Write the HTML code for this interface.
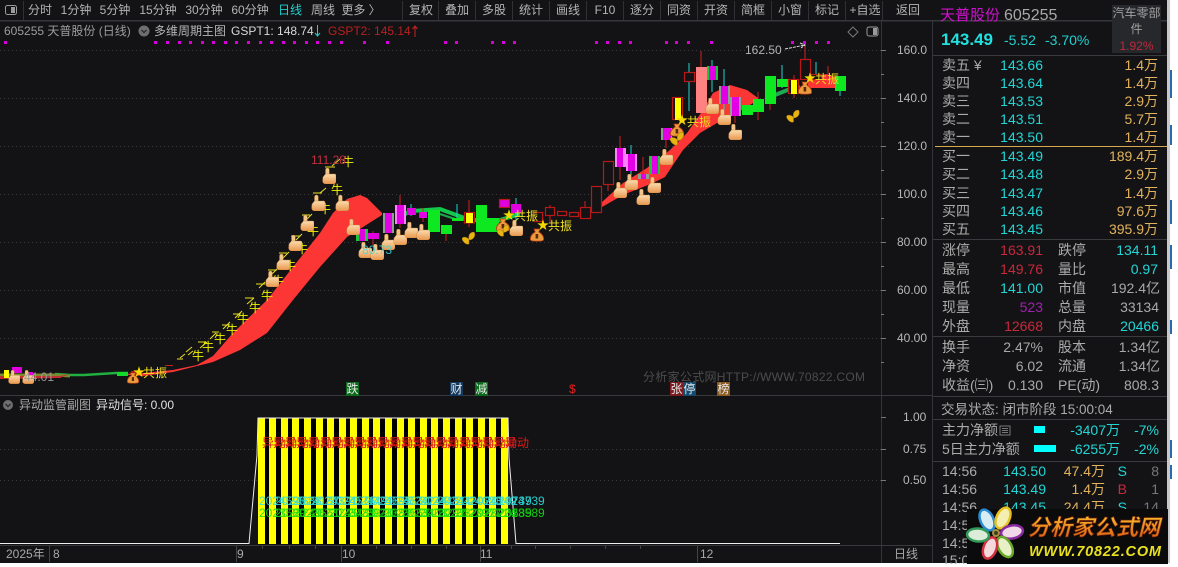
<!DOCTYPE html>
<html><head><meta charset="utf-8"><style>
html,body{margin:0;padding:0;background:#fff;width:1178px;height:567px;overflow:hidden}
svg{display:block}
text{font-family:"Liberation Sans","Noto Sans CJK SC",sans-serif;white-space:pre}
.t{font-size:12px;fill:#b4b4b4;text-anchor:middle}
.a{font-size:12px;fill:#b8b8b8}
.l{font-size:14px;fill:#ababab}
.p{font-size:14px;fill:#22d6d6;text-anchor:end}
.v{font-size:14px;fill:#e2b25c;text-anchor:end}
.g{font-size:14px;fill:#a8a8a8;text-anchor:end}
.r{font-size:14px;fill:#c8283c;text-anchor:end}
.n{font-size:12px;fill:#f0f000}
.z{font-size:12px;fill:#f0e020}
.sg{stroke:#3a3a3a;stroke-width:1;stroke-dasharray:1 3}
.w{stroke:#d02020;stroke-width:1}
.c{stroke:#22d0d0;stroke-width:1}
.h{fill:#131315;stroke:#b81818;stroke-width:1.2}
</style></head><body>
<svg width="1178" height="567" viewBox="0 0 1178 567" xmlns="http://www.w3.org/2000/svg">
<defs>
<linearGradient id="hg" x1="0" y1="0" x2="0" y2="1"><stop offset="0" stop-color="#fbdcae"/><stop offset="1" stop-color="#e9974e"/></linearGradient>
<linearGradient id="lg" x1="0" y1="0" x2="0" y2="1"><stop offset="0" stop-color="#f8c030"/><stop offset="1" stop-color="#d85a10"/></linearGradient>
<symbol id="hd" viewBox="0 0 14 16"><rect x="3.500" y="0" width="3.800" height="9" rx="1.800" fill="#f2c58a" stroke="#b9772f" stroke-width=".4"/><path d="M1 9 L3.500 6 H13 Q14 6 14 8 V13 Q14 16 11 16 H4 Q1 16 .6 13Z" fill="url(#hg)" stroke="#c58038" stroke-width=".4"/></symbol>
<symbol id="bg" viewBox="0 0 14 14"><path d="M4 1 L10 1 L8.800 4 C12.500 6 14 9 13.500 12 C13 13.600 1 13.600 .5 12 C0 9 1.500 6 5.200 4Z" fill="#ec9a3e" stroke="#b23a10" stroke-width=".8"/><rect x="5.600" y="6" width="2.600" height="4.500" fill="#5a2a10"/></symbol>
<symbol id="bf" viewBox="0 0 14 13"><path d="M7 7 C6 2 9 0 12 0 C14 3 12 8 7 8Z M7 7 C3 4 0 5 0 7 C1 10 4 13 7 12Z" fill="#e8b412" stroke="#a87808" stroke-width=".5"/></symbol>
</defs>
<rect width="1178" height="567" fill="#fff"/>
<rect width="1167" height="563" fill="#131315"/>
<rect x="1167" y="0" width="3" height="563" fill="#c8c8c8"/>
<g fill="#2a6ab0"><rect x="1170" y="70" width="2" height="28"/><rect x="1170" y="125" width="2" height="20"/><rect x="1170" y="200" width="2" height="24"/><rect x="1170" y="245" width="2" height="24"/><rect x="1170" y="320" width="2" height="14"/><rect x="1170" y="440" width="2" height="18"/><rect x="1170" y="465" width="2" height="14"/></g>

<!-- toolbar -->
<rect x="0" y="20" width="1167" height="1.500" fill="#36373a"/>
<rect x="5.500" y="5.500" width="11" height="9" rx="2" fill="none" stroke="#9a9a9a"/><rect x="11" y="7" width="4" height="6" fill="#9a9a9a"/>
<g stroke="#303134"><path d="M23.500 1V20M402.500 1V20M438.500 1V20M475.500 1V20M512.500 1V20M549.500 1V20M586.500 1V20M623.500 1V20M660.500 1V20M697.500 1V20M734.500 1V20M771.500 1V20M808.500 1V20M845.500 1V20M882.500 1V20"/></g>
<g>
<text class="t" x="40" y="14">分时</text><text class="t" x="76" y="14">1分钟</text><text class="t" x="115" y="14">5分钟</text><text class="t" x="158" y="14">15分钟</text><text class="t" x="204" y="14">30分钟</text><text class="t" x="250" y="14">60分钟</text><text class="t" x="290" y="14" style="fill:#20d0d0">日线</text><text class="t" x="323" y="14">周线</text><text class="t" x="361" y="14">更多 〉</text>
<text class="t" x="421" y="14">复权</text><text class="t" x="457" y="14">叠加</text><text class="t" x="494" y="14">多股</text><text class="t" x="531" y="14">统计</text><text class="t" x="568" y="14">画线</text><text class="t" x="605" y="14">F10</text><text class="t" x="642" y="14">逐分</text><text class="t" x="679" y="14">同资</text><text class="t" x="716" y="14">开资</text><text class="t" x="753" y="14">简框</text><text class="t" x="790" y="14">小窗</text><text class="t" x="827" y="14">标记</text><text class="t" x="865" y="14">+自选</text><text class="t" x="908" y="14">返回</text>
</g>

<!-- header line -->
<text x="4" y="35" font-size="12" fill="#9c9c9c">605255 天普股份 (日线)</text>
<circle cx="144" cy="31" r="5.500" fill="#6e6e6e"/><path d="M141.500 30l2.500 2.500 2.500-2.500" fill="none" stroke="#222" stroke-width="1.200"/>
<text x="154" y="35" font-size="12" fill="#b4b4b4">多维周期主图</text>
<text x="231" y="35" font-size="12" fill="#d8d8d8">GSPT1: 148.74</text>
<path d="M317.500 25V36M315 33l2.500 3 2.500-3" fill="none" stroke="#22d0d0"/>
<text x="328" y="35" font-size="12" fill="#b82020">GSPT2: 145.14</text>
<path d="M415 26V37M412.500 29l2.500-3 2.500 3" fill="none" stroke="#d02020"/>
<path d="M853 27l5 5-5 5-5-5z" fill="none" stroke="#777"/>
<rect x="867" y="27" width="11" height="9" rx="2" fill="none" stroke="#999"/><rect x="873" y="28" width="4" height="7" fill="#999"/>

<!-- magenta dots -->
<g fill="#d800d8">
<rect x="4" y="41" width="3" height="3"/><rect x="154" y="41" width="3" height="3"/><rect x="166" y="41" width="3" height="3"/><rect x="178" y="41" width="3" height="3"/><rect x="189" y="41" width="3" height="3"/><rect x="201" y="41" width="3" height="3"/><rect x="212" y="41" width="3" height="3"/><rect x="224" y="41" width="3" height="3"/><rect x="235" y="41" width="3" height="3"/><rect x="247" y="41" width="3" height="3"/><rect x="259" y="41" width="3" height="3"/><rect x="270" y="41" width="3" height="3"/><rect x="282" y="41" width="3" height="3"/><rect x="293" y="41" width="3" height="3"/><rect x="305" y="41" width="3" height="3"/><rect x="316" y="41" width="3" height="3"/><rect x="328" y="41" width="3" height="3"/><rect x="340" y="41" width="3" height="3"/><rect x="363" y="41" width="3" height="3"/><rect x="386" y="41" width="3" height="3"/><rect x="444" y="41" width="3" height="3"/><rect x="455" y="41" width="3" height="3"/><rect x="491" y="41" width="3" height="3"/><rect x="502" y="41" width="3" height="3"/><rect x="513" y="41" width="3" height="3"/><rect x="595" y="41" width="3" height="3"/><rect x="606" y="41" width="3" height="3"/><rect x="618" y="41" width="3" height="3"/><rect x="629" y="41" width="3" height="3"/><rect x="665" y="41" width="3" height="3"/><rect x="675" y="41" width="3" height="3"/><rect x="687" y="41" width="3" height="3"/><rect x="710" y="41" width="3" height="3"/><rect x="791" y="41" width="3" height="3"/><rect x="803" y="41" width="3" height="3"/><rect x="815" y="41" width="3" height="3"/><rect x="827" y="41" width="3" height="3"/>
</g>

<!-- grid -->
<path d="M0 50.500H881M0 98.500H881M0 146.500H881M0 194.500H881M0 242.500H881M0 290.500H881M0 338.500H881M0 480.500H881M0 449.500H881" class="sg" fill="none"/>

<!-- axes -->
<path d="M881.500 21V563M932.500 21V563" stroke="#34353a"/>
<path d="M0 395.500H932M0 545.500H932" stroke="#38393c"/>
<path d="M881 50.500h5M881 98.500h5M881 146.500h5M881 194.500h5M881 242.500h5M881 290.500h5M881 338.500h5M881 74.500h3M881 122.500h3M881 170.500h3M881 218.500h3M881 266.500h3M881 314.500h3M881 362.500h3M881 417.500h5M881 449.500h5M881 480.500h5" stroke="#777"/>
<g><text class="a" x="897" y="54">160.0</text><text class="a" x="897" y="102">140.0</text><text class="a" x="897" y="150">120.0</text><text class="a" x="897" y="198">100.0</text><text class="a" x="897" y="246">80.00</text><text class="a" x="897" y="294">60.00</text><text class="a" x="897" y="342">40.00</text><text class="a" x="903" y="421">1.00</text><text class="a" x="903" y="453">0.75</text><text class="a" x="903" y="484">0.50</text></g>

<!-- green thin ribbons -->
<path d="M55 374L70 375L84 375L116 373L128 373" fill="none" stroke="#1fb040" stroke-width="2.500"/>
<path d="M0 375L55 375L70 376" fill="none" stroke="#7a8a30" stroke-width="3"/>
<path d="M400 216L412 211L440 209L470 220L500 220L520 214" fill="none" stroke="#12c84a" stroke-width="4"/>
<path d="M440 214L458 220L475 220" fill="none" stroke="#1ea84a" stroke-width="2"/>
<path d="M775 95L790 89L800 87" fill="none" stroke="#1eaa50" stroke-width="4"/>

<!-- red ribbons -->
<path d="M120 374L143 373L173 370L197 365L213 356L233 333L267 300L293 267L320 233L333 213L347 199L360 195L367 198L382 213L382 215L363 227L347 237L320 267L293 300L267 333L240 350L213 362L197 366L173 372L143 376Z" fill="#fc3535"/>
<path d="M0 376L60 376L70 374L60 378L0 379Z" fill="#c03030"/>
<path d="M598 205L602 202L623 183L647 168L670 150L687 133L703 110L713 93L730 85L747 90L758 98L758 100L737 113L717 123L700 133L683 150L665 177L653 183L623 195L602 207Z" fill="#fc3535"/>
<path d="M808 79L826 74L840 78L840 88L808 88Z" fill="#fc3535"/>

<!-- candles left -->
<g>
<rect x="4" y="370" width="5" height="8" fill="#ffff00"/><rect x="12" y="367" width="10" height="6" fill="#e000e0"/><rect x="25" y="372" width="8" height="5" fill="#e000e0"/>
<rect x="117" y="372" width="11" height="4" fill="#14d82a"/><rect x="131" y="371" width="9" height="4" fill="#a81818"/>
<rect x="165" y="365" width="8" height="1" fill="#c02020"/>
<rect x="356" y="229" width="12" height="12" fill="#18c838"/><rect x="359" y="229" width="6" height="12" fill="#e000e0"/>
<path d="M373 231V245" class="w"/><rect x="368" y="233" width="11" height="6" fill="#e000e0"/>
<rect x="383" y="213" width="11" height="20" fill="#8aa090"/><rect x="385" y="213" width="7" height="20" fill="#e400e4"/>
<path d="M400 195V228" class="w"/><rect x="395" y="205" width="11" height="19" fill="#ff80ff"/><rect x="397" y="205" width="7" height="19" fill="#e400e4"/>
<path d="M411 204V216" class="c"/><rect x="407" y="208" width="9" height="7" fill="#e400e4"/>
<path d="M423 208V222" class="w"/><rect x="419" y="212" width="8" height="6" fill="#e400e4"/>
<rect x="428" y="210" width="12" height="22" fill="#0ee820"/>
<path d="M446 225V241" class="w"/><rect x="441" y="225" width="11" height="9" fill="#0ee820"/>
<path d="M457 204V221" class="c"/><rect x="452" y="218" width="11" height="3" fill="#0ee820"/>
<path d="M469 200V227" class="w"/><rect x="464.500" y="212.500" width="10" height="10.500" class="h"/><rect x="466" y="213" width="7" height="10" fill="#ffff00"/>
<rect x="476" y="205" width="11" height="27" fill="#0ee820"/><rect x="487" y="218" width="12" height="14" fill="#0ee820"/>
<rect x="499.500" y="199.500" width="10" height="8" class="h" style="fill:#e000e0"/>
<path d="M516 198V225" class="c"/><rect x="511" y="204" width="10" height="9" fill="#e000e0"/>
<rect x="533.500" y="212.500" width="9" height="9" class="h"/>
<path d="M550 205V222" class="w"/><rect x="545.500" y="207.500" width="9" height="8" class="h"/>
<rect x="557.500" y="211.500" width="9" height="4" class="h"/>
<rect x="569.500" y="212.500" width="9" height="4" class="h"/>
<path d="M585 201V207" class="w"/><rect x="580.500" y="207.500" width="10" height="11" class="h"/>
<rect x="591.500" y="186.500" width="10" height="26" class="h"/>
</g>
<!-- candles right -->
<g>
<path d="M608 185V191" class="w"/><rect x="603.500" y="161.500" width="10" height="23" class="h"/>
<path d="M620 136V180" class="w"/><rect x="615" y="148" width="11" height="19" fill="#ff80ff"/><rect x="617" y="148" width="6" height="19" fill="#e400e4"/>
<path d="M631 145V175" class="c"/><rect x="626" y="154" width="11" height="17" fill="#ff80ff"/><rect x="628" y="154" width="7" height="17" fill="#e400e4"/>
<path d="M643 157V175" class="w"/><rect x="638" y="174" width="11" height="5" fill="#8aa090"/><rect x="641" y="174" width="5" height="5" fill="#e400e4"/>
<rect x="649" y="156" width="11" height="18" fill="#18c838"/><rect x="652" y="156" width="6" height="18" fill="#e400e4"/>
<path d="M666 140V148" class="w"/><rect x="661" y="128" width="11" height="12" fill="#8aa090"/><rect x="663" y="128" width="8" height="12" fill="#e400e4"/>
<rect x="672.500" y="97.500" width="10" height="22" class="h"/><rect x="675" y="98" width="6" height="22" fill="#ffff00"/>
<path d="M689 63V111" class="c"/><rect x="684.500" y="72.500" width="10" height="9" class="h"/>
<path d="M701 51V67" class="w"/><rect x="696" y="67" width="11" height="46" fill="#ff8282"/>
<path d="M712 60V92" class="c"/><rect x="707" y="66" width="11" height="14" fill="#18c838"/><rect x="709" y="66" width="7" height="14" fill="#e400e4"/>
<path d="M724 69V110" class="c"/><rect x="719" y="86" width="11" height="18" fill="#8aa090"/><rect x="721" y="86" width="7" height="18" fill="#e400e4"/>
<path d="M735 116V123" class="w"/><rect x="730" y="97" width="11" height="19" fill="#8aa090"/><rect x="732" y="97" width="7" height="19" fill="#e400e4"/>
<rect x="742" y="105" width="11" height="10" fill="#0ee820"/>
<path d="M758 92V120" class="w"/><rect x="753" y="99" width="11" height="13" fill="#0ee820"/>
<path d="M770 104V110" class="w"/><rect x="765" y="76" width="11" height="28" fill="#0ee820"/>
<path d="M782 65V88" class="c"/><rect x="777" y="79" width="11" height="8" fill="#0ee820"/>
<path d="M794 75V98" class="w"/><rect x="788.500" y="79.500" width="10" height="14" class="h"/><rect x="791" y="80" width="6" height="14" fill="#ffff00"/>
<path d="M805 45V59" class="w"/><rect x="800.500" y="59.500" width="10" height="20" class="h"/>
<path d="M816 62V76" class="c"/><rect x="811.500" y="74.500" width="10" height="5" class="h"/>
<path d="M828 66V78" class="w"/>
<path d="M840 88V96" class="c"/><rect x="835" y="76" width="11" height="15" fill="#0ee820"/>
</g>

<!-- 牛 with arrows -->
<g fill="none" stroke="#e8e020" stroke-width="1">
<path d="M177 359h6M180 358l5-4"/><path d="M186 352l6-5M188 355l5-4"/><path d="M198 342h8M200 348l7-6"/><path d="M210 339l6-6M212 332h7"/><path d="M222 325h7M223 329l7-7"/><path d="M233 314h7M235 318l7-7"/><path d="M245 298h9M247 304l7-6"/><path d="M256 284h9M259 288l6-6"/><path d="M268 270h9M272 274l6-6"/><path d="M279 253h8M283 258l6-6"/><path d="M291 236h9M296 240l6-6"/><path d="M302 215h8M306 220l6-6"/><path d="M313 193h9M320 193l6-5"/><path d="M325 167h10M332 166l8-7"/>
</g>
<g><text class="n" x="192" y="360">牛</text><text class="n" x="202" y="351">牛</text><text class="n" x="214" y="343">牛</text><text class="n" x="226" y="334">牛</text><text class="n" x="237" y="323">牛</text><text class="n" x="249" y="312">牛</text><text class="n" x="261" y="300">牛</text><text class="n" x="272" y="285">牛</text><text class="n" x="284" y="270">牛</text><text class="n" x="296" y="253">牛</text><text class="n" x="307" y="235">牛</text><text class="n" x="319" y="213">牛</text><text class="n" x="331" y="194">牛</text><text class="n" x="342" y="166">牛</text></g>

<!-- hands -->
<use href="#hd" x="322" y="168" width="14" height="16"/><use href="#hd" x="311" y="195" width="14" height="16"/><use href="#hd" x="335" y="195" width="14" height="16"/><use href="#hd" x="300" y="215" width="14" height="16"/><use href="#hd" x="288" y="235" width="14" height="16"/><use href="#hd" x="276" y="254" width="14" height="16"/><use href="#hd" x="265" y="271" width="14" height="16"/><use href="#hd" x="346" y="219" width="14" height="16"/><use href="#hd" x="358" y="242" width="14" height="16"/><use href="#hd" x="370" y="244" width="14" height="16"/><use href="#hd" x="381" y="234" width="14" height="16"/><use href="#hd" x="393" y="229" width="14" height="16"/><use href="#hd" x="404" y="222" width="14" height="16"/><use href="#hd" x="416" y="224" width="14" height="16"/><use href="#hd" x="509" y="220" width="14" height="16"/>
<use href="#hd" x="613" y="182" width="14" height="16"/><use href="#hd" x="624" y="174" width="14" height="16"/><use href="#hd" x="636" y="189" width="14" height="16"/><use href="#hd" x="647" y="177" width="14" height="16"/><use href="#hd" x="659" y="149" width="14" height="16"/><use href="#hd" x="705" y="98" width="14" height="16"/><use href="#hd" x="717" y="109" width="14" height="16"/><use href="#hd" x="728" y="124" width="14" height="16"/>
<use href="#hd" x="8" y="370" width="12" height="14"/><use href="#hd" x="22" y="370" width="12" height="14"/>

<!-- bags -->
<use href="#bg" x="670" y="123" width="14" height="14"/><use href="#bg" x="798" y="81" width="14" height="14"/><use href="#bg" x="496" y="218" width="14" height="14"/><use href="#bg" x="530" y="228" width="14" height="14"/><use href="#bg" x="126" y="372" width="14" height="12"/>

<!-- butterflies -->
<use href="#bf" x="670" y="132" width="15" height="14"/><use href="#bf" x="786" y="110" width="15" height="13"/><use href="#bf" x="462" y="232" width="14" height="13"/><use href="#bf" x="497" y="224" width="13" height="14"/>

<!-- 共振 -->
<g font-size="12" fill="#f0e020">
<text x="133" y="376" fill="#f5d800">★</text><text class="z" x="143" y="377">共振</text>
<text x="503" y="219" fill="#f5d800">★</text><text class="z" x="514" y="220">共振</text>
<text x="537" y="229" fill="#f5d800">★</text><text class="z" x="548" y="230">共振</text>
<text x="676" y="124" fill="#f5d800">★</text><text class="z" x="687" y="126">共振</text>
<text x="804" y="82" fill="#f5d800">★</text><text class="z" x="815" y="83">共振</text>
</g>

<!-- value labels -->
<text x="311" y="164" font-size="12" fill="#c03040">111.28</text>
<text x="362" y="254" font-size="12" fill="#40d8d8" opacity=".85">80.73</text>
<text x="24" y="381" font-size="12" fill="#999">44.01</text>
<text x="745" y="54" font-size="12" fill="#b4b4b4">162.50</text>
<path d="M785 49l20-4M800 43l5 2-4 3" fill="none" stroke="#ddd" stroke-dasharray="3 1"/>

<!-- watermark -->
<text x="643" y="381" font-size="12" fill="#4c4c4c" textLength="222">分析家公式网HTTP://WWW.70822.COM</text>

<!-- signals -->
<rect x="346" y="382" width="13" height="14" fill="#0c6a1c"/><text x="346.500" y="393" font-size="12" fill="#e8e8e8">跌</text>
<rect x="450" y="382" width="13" height="14" fill="#123a60"/><text x="450.500" y="393" font-size="12" fill="#e8e8e8">财</text>
<rect x="475" y="382" width="13" height="14" fill="#0c6a1c"/><text x="475.500" y="393" font-size="12" fill="#e8e8e8">减</text>
<text x="569" y="393" font-size="12" fill="#e02020">$</text>
<rect x="670" y="382" width="13" height="14" fill="#7a1c20"/><text x="670.500" y="393" font-size="12" fill="#e8e8e8">张</text>
<rect x="683" y="382" width="13" height="14" fill="#124a70"/><text x="683.500" y="393" font-size="12" fill="#e8e8e8">停</text>
<rect x="717" y="382" width="13" height="14" fill="#8a5a20"/><text x="717.500" y="393" font-size="12" fill="#e8e8e8">榜</text>

<!-- sub chart header -->
<circle cx="8" cy="405" r="5" fill="#6e6e6e"/><path d="M5.500 404l2.500 2.500 2.500-2.500" fill="none" stroke="#222" stroke-width="1.200"/>
<text x="19" y="409" font-size="12" fill="#a8a8a8">异动监管副图</text>
<text x="96" y="409" font-size="12" fill="#e0e0e0">异动信号: 0.00</text>

<!-- sub chart -->
<rect x="258" y="418" width="250" height="126" fill="#000"/>
<g fill="#ffff00"><rect x="258" y="418" width="7" height="126"/><rect x="269" y="418" width="7" height="126"/><rect x="281" y="418" width="7" height="126"/><rect x="292" y="418" width="7" height="126"/><rect x="304" y="418" width="7" height="126"/><rect x="316" y="418" width="7" height="126"/><rect x="327" y="418" width="7" height="126"/><rect x="339" y="418" width="7" height="126"/><rect x="350" y="418" width="7" height="126"/><rect x="362" y="418" width="7" height="126"/><rect x="373" y="418" width="7" height="126"/><rect x="385" y="418" width="7" height="126"/><rect x="397" y="418" width="7" height="126"/><rect x="408" y="418" width="7" height="126"/><rect x="420" y="418" width="7" height="126"/><rect x="431" y="418" width="7" height="126"/><rect x="443" y="418" width="7" height="126"/><rect x="455" y="418" width="7" height="126"/><rect x="466" y="418" width="7" height="126"/><rect x="478" y="418" width="7" height="126"/><rect x="489" y="418" width="7" height="126"/><rect x="501" y="418" width="7" height="126"/></g>
<path d="M0 543.500H249L257 455L258 418H508L509 458L516 543.500H840" fill="none" stroke="#eee" stroke-width="1"/>
<g font-size="12" fill="#e01818">
<text x="262" y="447">异动</text><text x="273" y="447">异动</text><text x="285" y="447">异动</text><text x="296" y="447">异动</text><text x="308" y="447">异动</text><text x="320" y="447">异动</text><text x="331" y="447">异动</text><text x="343" y="447">异动</text><text x="354" y="447">异动</text><text x="366" y="447">异动</text><text x="377" y="447">异动</text><text x="389" y="447">异动</text><text x="401" y="447">异动</text><text x="412" y="447">异动</text><text x="424" y="447">异动</text><text x="435" y="447">异动</text><text x="447" y="447">异动</text><text x="459" y="447">异动</text><text x="470" y="447">异动</text><text x="482" y="447">异动</text><text x="493" y="447">异动</text><text x="505" y="447">异动</text>
</g>
<g font-size="12" fill="#2ce0e0" opacity=".9">
<text x="259" y="505">2024595</text><text x="275" y="505">2024688</text><text x="293" y="505">2024187</text><text x="311" y="505">2024391</text><text x="329" y="505">2024576</text><text x="347" y="505">2024491</text><text x="365" y="505">2024695</text><text x="383" y="505">2024530</text><text x="401" y="505">2024244</text><text x="419" y="505">2024481</text><text x="437" y="505">2024420</text><text x="455" y="505">2024623</text><text x="470" y="505">2024349</text><text x="485" y="505">2024739</text><text x="498" y="505">2024739</text>
</g>
<g font-size="12" fill="#10e010" opacity=".9">
<text x="259" y="517">2023589</text><text x="275" y="517">2023249</text><text x="293" y="517">2023561</text><text x="311" y="517">2023245</text><text x="329" y="517">2023483</text><text x="347" y="517">2023920</text><text x="365" y="517">2023382</text><text x="383" y="517">2023653</text><text x="401" y="517">2023403</text><text x="419" y="517">2023292</text><text x="437" y="517">2023829</text><text x="455" y="517">2023977</text><text x="470" y="517">2023224</text><text x="485" y="517">2023589</text><text x="498" y="517">2023589</text>
</g>

<!-- x axis -->
<g font-size="12" fill="#a8a8a8"><text x="6" y="558">2025年</text><text x="53" y="558">8</text><text x="237" y="558">9</text><text x="342" y="558">10</text><text x="480" y="558">11</text><text x="700" y="558">12</text><text x="894" y="558">日线</text></g>
<path d="M49.500 546v16M236.500 546v16M341.500 546v16M480.500 546v16M697.500 546v16M262.500 546v3M289.500 546v3M315.500 546v3M376.500 546v3M411.500 546v3M446.500 546v3M511.500 546v3M535.500 546v3M570.500 546v3M605.500 546v3M640.500 546v3" stroke="#444"/>

<!-- right panel -->
<text x="940" y="20" font-size="15" fill="#d010d0">天普股份</text>
<text x="1004" y="20" font-size="16" fill="#a8a8a8">605255</text>
<text x="941" y="45" font-size="17" font-weight="bold" fill="#22e0e0">143.49</text>
<text x="1004" y="45" font-size="14" fill="#22d0d0">-5.52</text>
<text x="1045" y="45" font-size="14" fill="#22d0d0">-3.70%</text>
<rect x="1112" y="5" width="49" height="48" fill="#27282b"/>
<text x="1136.500" y="17" font-size="12" fill="#a0a0a0" text-anchor="middle">汽车零部</text>
<text x="1136.500" y="33" font-size="12" fill="#a0a0a0" text-anchor="middle">件</text>
<text x="1136.500" y="50" font-size="12" fill="#c0283c" text-anchor="middle">1.92%</text>
<path d="M933 55.500H1167M933 239.500H1167M933 336.500H1167M933 396.500H1167M933 419.500H1167M933 461.500H1167" stroke="#3a3b3e"/>
<rect x="935" y="146" width="232" height="1" fill="#d8a850"/>

<text class="l" x="942" y="70">卖五 ¥</text><text class="p" x="1043" y="70">143.66</text><text class="v" x="1158" y="70">1.4万</text>
<text class="l" x="942" y="88">卖四</text><text class="p" x="1043" y="88">143.64</text><text class="v" x="1158" y="88">1.4万</text>
<text class="l" x="942" y="106">卖三</text><text class="p" x="1043" y="106">143.53</text><text class="v" x="1158" y="106">2.9万</text>
<text class="l" x="942" y="124">卖二</text><text class="p" x="1043" y="124">143.51</text><text class="v" x="1158" y="124">5.7万</text>
<text class="l" x="942" y="142">卖一</text><text class="p" x="1043" y="142">143.50</text><text class="v" x="1158" y="142">1.4万</text>
<text class="l" x="942" y="161">买一</text><text class="p" x="1043" y="161">143.49</text><text class="v" x="1158" y="161">189.4万</text>
<text class="l" x="942" y="179">买二</text><text class="p" x="1043" y="179">143.48</text><text class="v" x="1158" y="179">2.9万</text>
<text class="l" x="942" y="198">买三</text><text class="p" x="1043" y="198">143.47</text><text class="v" x="1158" y="198">1.4万</text>
<text class="l" x="942" y="216">买四</text><text class="p" x="1043" y="216">143.46</text><text class="v" x="1158" y="216">97.6万</text>
<text class="l" x="942" y="234">买五</text><text class="p" x="1043" y="234">143.45</text><text class="v" x="1158" y="234">395.9万</text>

<text class="l" x="942" y="255">涨停</text><text class="r" x="1043" y="255">163.91</text><text class="l" x="1058" y="255">跌停</text><text class="p" x="1158" y="255">134.11</text>
<text class="l" x="942" y="274">最高</text><text class="r" x="1043" y="274">149.76</text><text class="l" x="1058" y="274">量比</text><text class="p" x="1158" y="274">0.97</text>
<text class="l" x="942" y="293">最低</text><text class="p" x="1043" y="293">141.00</text><text class="l" x="1058" y="293">市值</text><text class="g" x="1160" y="293">192.4亿</text>
<text class="l" x="942" y="312">现量</text><text class="p" x="1043" y="312" style="fill:#a020b0">523</text><text class="l" x="1058" y="312">总量</text><text class="g" x="1159" y="312">33134</text>
<text class="l" x="942" y="331">外盘</text><text class="r" x="1043" y="331">12668</text><text class="l" x="1058" y="331">内盘</text><text class="p" x="1159" y="331">20466</text>
<text class="l" x="942" y="352">换手</text><text class="g" x="1043" y="352">2.47%</text><text class="l" x="1058" y="352">股本</text><text class="g" x="1160" y="352">1.34亿</text>
<text class="l" x="942" y="371">净资</text><text class="g" x="1043" y="371">6.02</text><text class="l" x="1058" y="371">流通</text><text class="g" x="1160" y="371">1.34亿</text>
<text class="l" x="942" y="390">收益(㈢)</text><text class="g" x="1043" y="390">0.130</text><text class="l" x="1058" y="390">PE(动)</text><text class="g" x="1159" y="390">808.3</text>

<text class="l" x="941" y="414" style="font-size:13.500px">交易状态: 闭市阶段 15:00:04</text>
<text class="l" x="942" y="435">主力净额</text>
<rect x="1000" y="426" width="10" height="9" fill="none" stroke="#777"/><path d="M1002 428.500h6M1002 430.500h6M1002 432.500h6" stroke="#777"/>
<rect x="1034" y="426" width="11" height="7" fill="#00ffff"/>
<text class="p" x="1120" y="435">-3407万</text><text class="p" x="1159" y="435">-7%</text>
<text class="l" x="942" y="454">5日主力净额</text>
<rect x="1034" y="445" width="22" height="7" fill="#00ffff"/>
<text class="p" x="1120" y="454">-6255万</text><text class="p" x="1159" y="454">-2%</text>

<text class="l" x="942" y="476">14:56</text><text class="p" x="1046" y="476">143.50</text><text class="v" x="1105" y="476">47.4万</text><text class="p" x="1127" y="476">S</text><text class="g" x="1159" y="476" style="fill:#777">8</text>
<text class="l" x="942" y="494">14:56</text><text class="p" x="1046" y="494">143.49</text><text class="v" x="1105" y="494">1.4万</text><text class="r" x="1127" y="494">B</text><text class="g" x="1159" y="494" style="fill:#777">1</text>
<text class="l" x="942" y="512">14:56</text><text class="p" x="1046" y="512">143.45</text><text class="v" x="1105" y="512">24.4万</text><text class="p" x="1127" y="512">S</text><text class="g" x="1159" y="512" style="fill:#777">14</text>
<text class="l" x="942" y="530">14:56</text>
<text class="l" x="942" y="548">14:56</text>
<text class="l" x="942" y="565">15:00</text>

<!-- logo -->
<rect x="967" y="509" width="201" height="55" fill="#0b0b0b"/>
<g stroke-width="2.500">
<ellipse cx="987" cy="520" rx="6.500" ry="11" fill="#d8ecf4" stroke="#2a8ad0" transform="rotate(-25 987 520)"/>
<ellipse cx="1003" cy="518" rx="6.500" ry="11" fill="#f4eeb0" stroke="#e8c020" transform="rotate(25 1003 518)"/>
<ellipse cx="1012" cy="532" rx="11" ry="6.500" fill="#f0d8e8" stroke="#8a2aa0" transform="rotate(-10 1012 532)"/>
<ellipse cx="1005" cy="547" rx="6.500" ry="11" fill="#e8f0c8" stroke="#6aa828" transform="rotate(-30 1005 547)"/>
<ellipse cx="990" cy="548" rx="6.500" ry="11" fill="#f4d8dc" stroke="#d03040" transform="rotate(20 990 548)"/>
<ellipse cx="978" cy="535" rx="11" ry="6.500" fill="#dcecd8" stroke="#309a58" transform="rotate(5 978 535)"/>
<circle cx="996" cy="533" r="4" fill="#a89040" stroke="none"/>
<circle cx="996" cy="533" r="2" fill="#404020" stroke="none"/>
</g>
<text x="1028" y="535" font-size="22" font-weight="bold" font-style="italic" fill="url(#lg)" stroke="#7a2008" stroke-width=".6" textLength="132">分析家公式网</text>
<text x="1029" y="556" font-size="14.500" font-weight="bold" font-style="italic" fill="#e8e020" textLength="132">WWW.70822.COM</text>
<rect x="0" y="564" width="1178" height="3" fill="#fff"/>
</svg>
</body></html>
